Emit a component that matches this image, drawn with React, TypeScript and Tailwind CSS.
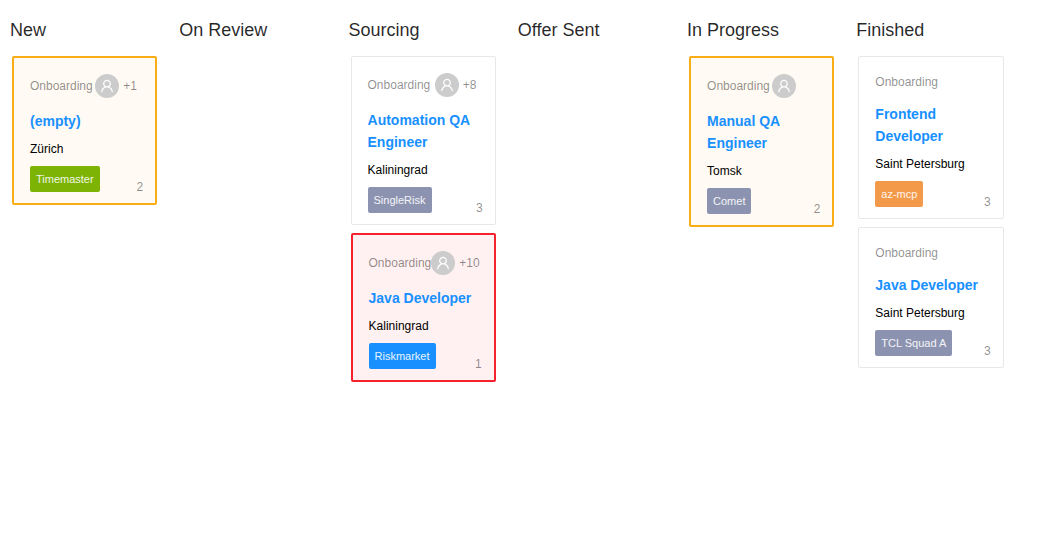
import React from "react";

type Tone = "plain" | "warning" | "danger";

interface Job {
  assignee?: boolean;
  more?: string;
  title: string;
  city: string;
  tag: string;
  tagClass: string;
  count: number;
  tone: Tone;
}

const tones: Record<Tone, string> = {
  plain: "border border-[#e8e8e8] bg-white",
  warning: "border-2 border-[#faad14] bg-[#fffaf3]",
  danger: "border-2 border-[#f5222d] bg-[#fff1f1]",
};

const columns: { name: string; jobs: Job[] }[] = [
  {
    name: "New",
    jobs: [
      { assignee: true, more: "+1", title: "(empty)", city: "Zürich", tag: "Timemaster", tagClass: "bg-[#7cb305]", count: 2, tone: "warning" },
    ],
  },
  { name: "On Review", jobs: [] },
  {
    name: "Sourcing",
    jobs: [
      { assignee: true, more: "+8", title: "Automation QA Engineer", city: "Kaliningrad", tag: "SingleRisk", tagClass: "bg-[#8c93b0]", count: 3, tone: "plain" },
      { assignee: true, more: "+10", title: "Java Developer", city: "Kaliningrad", tag: "Riskmarket", tagClass: "bg-[#1890ff]", count: 1, tone: "danger" },
    ],
  },
  { name: "Offer Sent", jobs: [] },
  {
    name: "In Progress",
    jobs: [
      { assignee: true, title: "Manual QA Engineer", city: "Tomsk", tag: "Comet", tagClass: "bg-[#8c93b0]", count: 2, tone: "warning" },
    ],
  },
  {
    name: "Finished",
    jobs: [
      { title: "Frontend Developer", city: "Saint Petersburg", tag: "az-mcp", tagClass: "bg-[#f39a4a]", count: 3, tone: "plain" },
      { title: "Java Developer", city: "Saint Petersburg", tag: "TCL Squad A", tagClass: "bg-[#8c93b0]", count: 3, tone: "plain" },
    ],
  },
];

function Avatar() {
  return (
    <span className="flex size-6 shrink-0 items-center justify-center rounded-full bg-[#ccc] text-white">
      <svg viewBox="64 64 896 896" className="size-[14px]" fill="currentColor" aria-hidden="true">
        <path d="M858.5 763.6a374 374 0 0 0-80.6-119.5 375.63 375.63 0 0 0-119.5-80.6c-.4-.2-.8-.3-1.2-.5C719.5 518 760 444.700 760 362c0-137-111-248-248-248S264 225 264 362c0 82.700 40.500 156 102.800 201.100-.4.2-.8.3-1.200.5-44.800 18.900-85 46-119.500 80.600a375.630 375.630 0 0 0-80.600 119.500A371.700 371.700 0 0 0 136 901.800a8 8 0 0 0 8 8.200h60c4.400 0 7.900-3.500 8-7.800 2-77.200 33-149.500 87.800-204.300 56.700-56.700 132-87.900 212.200-87.900s155.500 31.200 212.200 87.900C779 752.700 810 825 812 902.200c.1 4.400 3.600 7.800 8 7.800h60a8 8 0 0 0 8-8.200c-1-47.800-10.900-94.300-29.500-138.200zM512 534c-45.900 0-89.100-17.900-121.600-50.400S340 407.900 340 362s17.900-89.100 50.400-121.600S466.100 190 512 190s89.100 17.900 121.600 50.400S684 316.100 684 362s-17.900 89.100-50.400 121.600S557.900 534 512 534z" />
      </svg>
    </span>
  );
}

function JobCard({ job }: { job: Job }) {
  return (
    <article className={`relative rounded-[2px] px-4 pt-4 pb-[11px] ${tones[job.tone]}`}>
      <div className="flex items-center justify-between text-xs leading-[18px] text-black/45">
        <span className="shrink-0">Onboarding</span>
        {job.assignee && (
          <div className="flex min-w-11 shrink-0 items-center gap-1">
            <Avatar />
            {job.more && <span>{job.more}</span>}
          </div>
        )}
      </div>
      <h3 className="mt-3 text-sm leading-[22px] font-bold text-[#1890ff]">{job.title}</h3>
      <p className="mt-2 text-xs leading-[18px] text-black">{job.city}</p>
      <div className="mt-2 flex">
        <span className={`h-[26px] rounded-[2px] px-1.5 text-[11px] leading-[26px] text-white/90 ${job.tagClass}`}>{job.tag}</span>
      </div>
      <span className="absolute right-3 bottom-[7px] text-xs leading-[18px] text-black/45">{job.count}</span>
    </article>
  );
}

export default function App() {
  return (
    <main className="h-[552px] w-full overflow-hidden bg-white pl-[10px] font-['Liberation_Sans',Arial,sans-serif]">
      <div className="grid w-[1015.6px] grid-cols-6">
        {columns.map((column) => (
          <section key={column.name} className="min-w-0">
            <h2 className="mt-4 text-lg leading-7 text-black/85">{column.name}</h2>
            <div className="mt-3 ml-0.5 flex w-[145.28px] flex-col gap-2">
              {column.jobs.map((job) => (
                <JobCard key={job.title} job={job} />
              ))}
            </div>
          </section>
        ))}
      </div>
    </main>
  );
}
